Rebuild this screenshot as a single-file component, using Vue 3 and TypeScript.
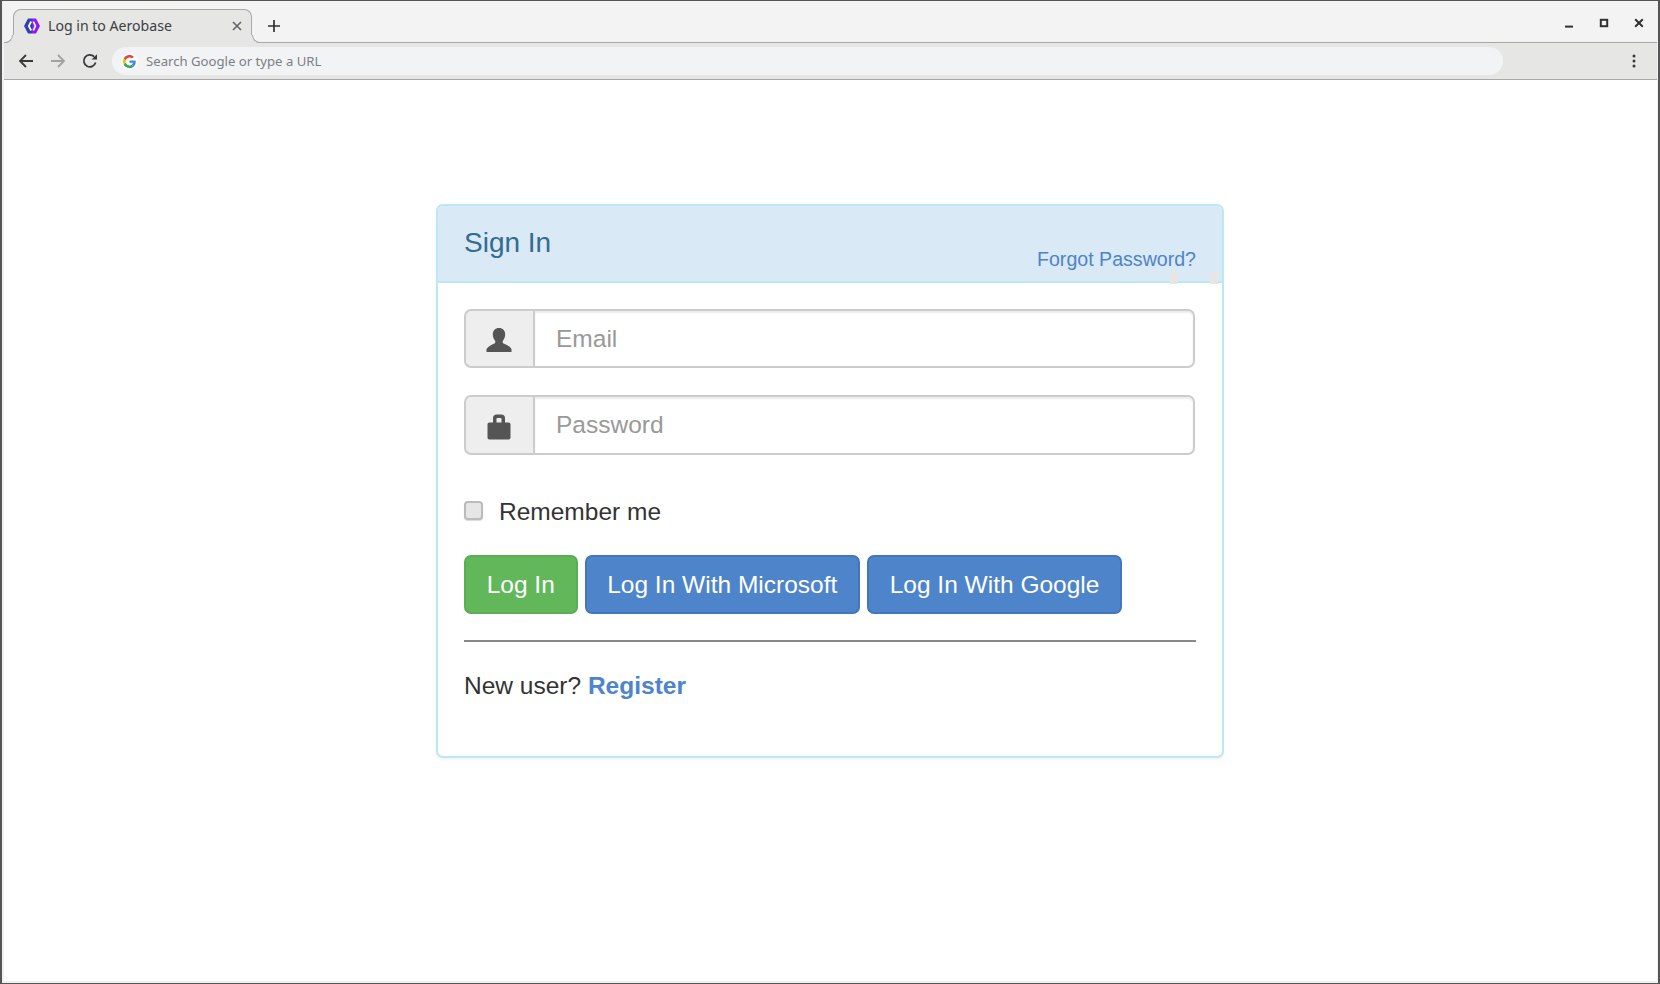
<script setup lang="ts">
const tabTitle = 'Log in to Aerobase'
</script>

<template>
  <div class="window">
    <div class="tabstrip">
      <div class="tab">
        <svg class="favicon" viewBox="0 0 16 16" width="16" height="16">
          <path d="M4 .5h4v15H4L0 8z" fill="#2f3fb5" />
          <path d="M8 .5h4L16 8l-4 7.500H8z" fill="#8a1df0" />
          <path d="M7.200 3.500 4.800 8l2.400 4.500M9.300 3.500 11.400 8l-2.100 4.500" stroke="#fff" stroke-width="1.700" fill="none" />
        </svg>
        <span class="tab-title">{{ tabTitle }}</span>
        <svg class="tab-close" viewBox="0 0 10 10" width="10" height="10">
          <path d="M1 1l8 8M9 1l-8 8" stroke="#5f6368" stroke-width="1.6" fill="none" />
        </svg>
      </div>
      <svg class="new-tab" viewBox="0 0 12 12" width="12" height="12">
        <path d="M6 0v12M0 6h12" stroke="#2f3133" stroke-width="1.7" fill="none" />
      </svg>
      <div class="win-controls">
        <svg viewBox="0 0 10 10" width="10" height="10"><path d="M1 8.6h8" stroke="#2f3133" stroke-width="2" /></svg>
        <svg viewBox="0 0 10 10" width="10" height="10"><rect x="1.8" y="1.8" width="6.4" height="6.4" fill="none" stroke="#2f3133" stroke-width="2" /></svg>
        <svg viewBox="0 0 10 10" width="10" height="10"><path d="M1.2 1.2l7.6 7.6M8.8 1.2l-7.6 7.6" stroke="#2f3133" stroke-width="2" /></svg>
      </div>
    </div>
    <div class="toolbar">
      <svg class="nav" viewBox="0 0 16 16" width="16" height="16">
        <path d="M15 8H2M8 2 2 8l6 6" stroke="#37393b" stroke-width="1.8" fill="none" />
      </svg>
      <svg class="nav" viewBox="0 0 16 16" width="16" height="16">
        <path d="M1 8h13M8 2l6 6-6 6" stroke="#a2a2a2" stroke-width="1.8" fill="none" />
      </svg>
      <svg class="nav" viewBox="0 0 16 16" width="16" height="16">
        <path d="M13.6 9.5A6 6 0 1 1 12.2 3.7" stroke="#37393b" stroke-width="1.8" fill="none" />
        <path d="M9.6 6.6H15V1.2z" fill="#37393b" />
      </svg>
      <div class="omnibox">
        <span class="g-badge">
          <svg viewBox="0 0 48 48" width="13" height="13">
            <path fill="#EA4335" d="M24 9.5c3.5 0 6.700 1.200 9.200 3.600l6.900-6.900C35.900 2.400 30.500 0 24 0 14.600 0 6.500 5.400 2.600 13.200l8 6.200C12.400 13.700 17.700 9.500 24 9.500z" />
            <path fill="#4285F4" d="M47 24.500c0-1.600-.2-3.200-.4-4.500H24v9h12.900c-.6 3-2.200 5.400-4.800 7.100l7.700 6C44.300 38 47 31.800 47 24.500z" />
            <path fill="#FBBC05" d="M10.600 28.600A14.500 14.500 0 0 1 10.600 19.400l-8-6.200a24 24 0 0 0 0 21.600z" />
            <path fill="#34A853" d="M24 48c6.500 0 11.900-2.100 15.800-5.800l-7.700-6c-2.100 1.400-4.900 2.300-8.100 2.300-6.300 0-11.600-4.200-13.500-9.900l-8 6.200C6.500 42.600 14.600 48 24 48z" />
          </svg>
        </span>
        <span class="omni-text">Search Google or type a URL</span>
      </div>
      <svg class="menu" viewBox="0 0 4 16" width="4" height="16">
        <circle cx="2" cy="3" r="1.500" fill="#37393b" />
        <circle cx="2" cy="8" r="1.500" fill="#37393b" />
        <circle cx="2" cy="13" r="1.500" fill="#37393b" />
      </svg>
    </div>
    <main class="page">
      <section class="panel">
        <header class="panel-head">
          <h3 class="panel-title">Sign In</h3>
          <a class="forgot">Forgot Password?</a>
          <i class="speck speck-a"></i>
          <i class="speck speck-b"></i>
        </header>
        <div class="panel-body">
          <div class="input-group">
            <span class="addon">
              <svg class="icon-user" viewBox="0 0 26 26" width="26" height="26">
                <path d="M13 1c3.800 0 6.200 2.700 6.200 6.300 0 2.500-.9 4.900-2.100 6.300-.7.900-.6 2.300.5 2.800 2.800 1.200 6.200 2.800 7.900 5.600V25H.5v-3c1.700-2.800 5.100-4.400 7.900-5.600 1.100-.5 1.200-1.900.5-2.800-1.200-1.400-2.100-3.800-2.100-6.300C6.800 3.700 9.200 1 13 1z" fill="#555" />
              </svg>
            </span>
            <input class="field" type="text" placeholder="Email" />
          </div>
          <div class="input-group second">
            <span class="addon">
              <svg class="icon-lock" viewBox="0 0 26 26" width="26" height="26">
                <path fill-rule="evenodd" d="M7 8.500V4c0-2 1.500-3.500 3.500-3.500h5C17.500.5 19 2 19 4v4.500h3.500c1.200 0 2 .8 2 2v13c0 1.200-.8 2-2 2h-19c-1.200 0-2-.8-2-2v-13c0-1.200.8-2 2-2zM10.500 8.500h5V4.800c0-.5-.4-.8-.8-.8h-3.400c-.4 0-.8.300-.8.800z" fill="#555" />
              </svg>
            </span>
            <input class="field" type="password" placeholder="Password" />
          </div>
          <label class="remember">
            <input class="check" type="checkbox" />
            <span>Remember me</span>
          </label>
          <div class="actions">
            <button class="btn btn-success" type="button">Log In</button>
            <button class="btn btn-primary" type="button">Log In With Microsoft</button>
            <button class="btn btn-primary" type="button">Log In With Google</button>
          </div>
          <hr class="rule" />
          <p class="register">New user? <a class="reg-link">Register</a></p>
        </div>
      </section>
    </main>
  </div>
</template>

<style>
html, body { margin: 0; background: #fff; }
</style>

<style scoped>
.window {
  width: 1660px;
  height: 984px;
  box-sizing: border-box;
  border-style: solid;
  border-color: #555;
  border-width: 1px 2px 1px 2px;
  padding: 0 1px 2px 2px;
  overflow: hidden;
  display: flex;
  flex-direction: column;
  background: #f1f1f1;
  font-family: "Liberation Sans", Arial, sans-serif;
}
.tabstrip {
  height: 42px;
  flex: none;
  display: flex;
  align-items: flex-end;
  background: #f3f3f3;
  border-bottom: 1px solid #a8a8a8;
  padding-left: 9px;
  position: relative;
  box-sizing: border-box;
}
.tab {
  width: 239px;
  height: 34px;
  margin-bottom: -1px;
  box-sizing: border-box;
  display: flex;
  align-items: center;
  background: #e6e6e4;
  border: 1px solid #a8a8a8;
  border-bottom: none;
  border-radius: 8px 8px 0 0;
  padding: 0 9px 2px 10px;
  position: relative;
}
.tab::before,
.tab::after {
  content: "";
  position: absolute;
  bottom: 0;
  width: 8px;
  height: 8px;
  border-bottom: 1px solid #a8a8a8;
  box-sizing: border-box;
}
.tab::before {
  left: -9px;
  border-right: 1px solid #a8a8a8;
  border-bottom-right-radius: 8px;
  box-shadow: 3px 3px 0 3px #e6e6e4;
  clip-path: inset(0 -1px 0 0);
}
.tab::after {
  right: -9px;
  border-left: 1px solid #a8a8a8;
  border-bottom-left-radius: 8px;
  box-shadow: -3px 3px 0 3px #e6e6e4;
  clip-path: inset(0 0 0 -1px);
}
.favicon { flex: none; }
.tab-title {
  margin-left: 8px;
  flex: 1;
  font: 14.1px "Noto Sans", sans-serif;
  color: #3c4043;
  white-space: nowrap;
}
.tab-close { flex: none; }
.new-tab { position: absolute; left: 264px; top: 19px; }
.win-controls {
  position: absolute;
  right: 13px;
  top: 17px;
  display: flex;
  gap: 25px;
}
.toolbar {
  height: 37px;
  flex: none;
  box-sizing: border-box;
  display: flex;
  align-items: center;
  background: #e6e6e4;
  border-bottom: 1px solid #a8a8a8;
  padding-left: 14px;
}
.nav { flex: none; margin-right: 16px; }
.omnibox {
  margin-left: -2px;
  width: 1391px;
  height: 28px;
  display: flex;
  align-items: center;
  background: #f2f3f5;
  border-radius: 14px;
  padding-left: 9px;
  box-sizing: border-box;
}
.g-badge {
  width: 17px;
  height: 17px;
  flex: none;
  display: flex;
  align-items: center;
  justify-content: center;
  background: #fff;
  border-radius: 50%;
}
.omni-text {
  margin-left: 8px;
  font: 13.15px "Noto Sans", sans-serif;
  color: #7b7f84;
}
.menu { flex: none; margin-left: auto; margin-right: 21px; }
.page {
  flex: 1;
  display: flex;
  justify-content: center;
  align-items: flex-start;
  padding-top: 124px;
  background: #fff;
}
.panel {
  width: 788px;
  height: 554px;
  box-sizing: border-box;
  border: 2px solid #bce8f1;
  border-radius: 7px;
  background: #fff;
  box-shadow: 0 2px 3px rgba(0, 0, 0, 0.05);
  margin-right: 1px;
}
.panel-head {
  height: 77px;
  box-sizing: border-box;
  background: #d9e9f5;
  border-bottom: 2px solid #bce8f1;
  border-radius: 5px 5px 0 0;
  padding: 0 26px;
  display: flex;
  justify-content: space-between;
  position: relative;
}
.panel-title {
  margin: 21px 0 0;
  font-size: 28px;
  line-height: 31px;
  font-weight: 400;
  color: #336c90;
}
.forgot {
  margin-top: 39px;
  font-size: 19.6px;
  line-height: 28px;
  color: #4e84c9;
}
.speck { position: absolute; top: 66px; width: 8px; height: 12px; background: #e6e6e4; }
.speck-a { left: 732px; }
.speck-b { left: 772px; }
.panel-body { padding: 26px; }
.input-group { display: flex; height: 59px; margin-right: 1px; }
.second { margin-top: 27px; height: 60px; }
.addon {
  width: 69px;
  flex: none;
  box-sizing: border-box;
  display: flex;
  align-items: center;
  justify-content: center;
  background: #eee;
  border: 2px solid #ccc;
  border-right: none;
  border-radius: 7px 0 0 7px;
}
.icon-user { margin: 2px 2px 0 0; }
.icon-lock { margin: 4px 2px 0 0; }
.field {
  flex: 1;
  min-width: 0;
  box-sizing: border-box;
  border: 2px solid #ccc;
  border-radius: 0 7px 7px 0;
  padding: 0 21px;
  font: 24.5px "Liberation Sans", Arial, sans-serif;
  color: #555;
  outline: none;
  box-shadow: inset 0 2px 2px rgba(0, 0, 0, 0.075);
}
.field::placeholder { color: #999; opacity: 1; }
.remember {
  display: flex;
  align-items: center;
  margin-top: 39px;
  font-size: 24.5px;
  line-height: 35px;
  color: #333;
}
.check {
  appearance: none;
  width: 19px;
  height: 19px;
  margin: 0 16px 2px 0;
  box-sizing: border-box;
  border: 2px solid #bbb;
  border-radius: 4px;
  background: #e6e6e6;
  box-shadow: 0 1px 1px rgba(0, 0, 0, 0.15);
}
.actions { display: flex; gap: 7px; margin-top: 26px; }
.btn {
  height: 59px;
  box-sizing: border-box;
  padding: 0 20.7px;
  border-radius: 7px;
  border: 2px solid;
  font: 24.5px "Liberation Sans", Arial, sans-serif;
  color: #fff;
}
.btn-success { background: #62b75a; border-color: #59ad52; }
.btn-primary { background: #4e84c9; border-color: #4377bb; }
.rule { margin: 26px 0 0; border: none; border-top: 2px solid #888; }
.register {
  margin: 26px 0 0;
  font-size: 24.5px;
  line-height: 35px;
  color: #333;
}
.reg-link { font-weight: 700; color: #4e84c9; }
</style>
